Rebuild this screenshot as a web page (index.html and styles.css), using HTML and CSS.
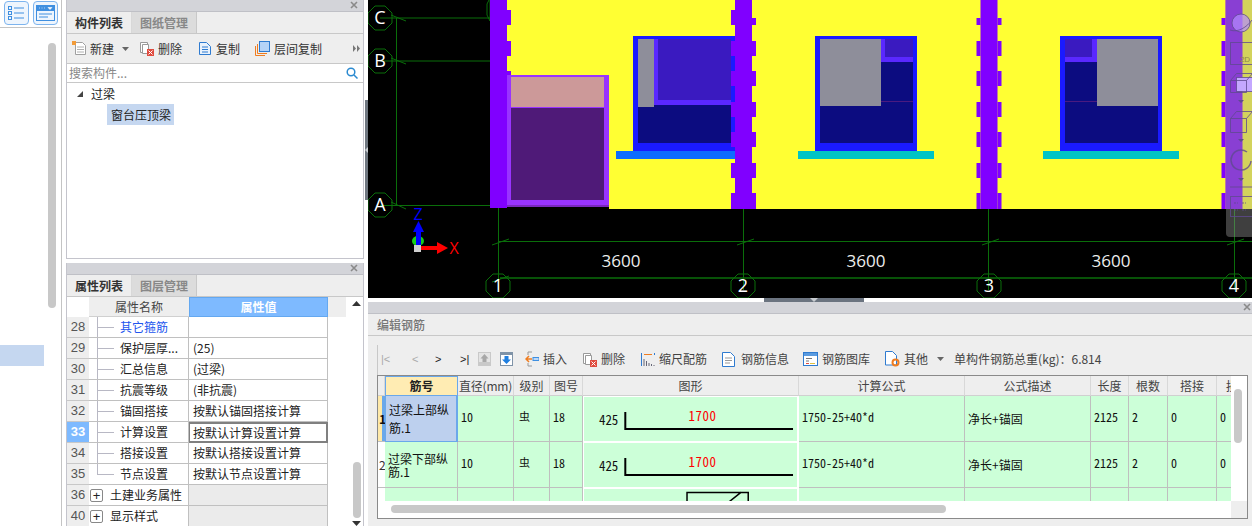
FILE: index.html
```html
<!DOCTYPE html>
<html lang="zh">
<head>
<meta charset="utf-8">
<title>编辑钢筋</title>
<link rel="stylesheet" href="styles.css">
</head>
<body>
<aside class="strip">
  <div class="strip-top">
    <span class="strip-btn"><svg width="21" height="20" viewBox="0 0 21 20"><g fill="none" stroke="#3f8fe0"><rect x="2.500" y="3.500" width="3" height="3"/><rect x="2.500" y="8.500" width="3" height="3"/><rect x="2.500" y="13.500" width="3" height="3"/><path d="M8 5h10M8 10h10M8 15h10"/></g></svg></span>
    <span class="strip-btn"><svg width="21" height="20" viewBox="0 0 21 20"><rect x="1.500" y="2.500" width="18" height="15" fill="none" stroke="#3f8fe0"/><rect x="2" y="3" width="17" height="5" fill="#3f8fe0"/><path d="M4 5h1M6.500 5h1M9 5h1M13 4.500h4l-2 2z" fill="#fff" stroke="#fff" stroke-width=".6"/><path d="M4 11h13M4 14h9" stroke="#3f8fe0"/></svg></span>
  </div>
  <div class="strip-body">
    <div class="strip-thumb"></div>
    <div class="strip-mark"></div>
  </div>
</aside>

<section class="side">
  <div class="panel panel-list">
    <div class="titlebar"><svg class="close" width="9" height="9" viewBox="0 0 9 9"><path d="M1 1l6 6M7 1L1 7" stroke="#8a8a8a" stroke-width="1.600"/></svg></div>
    <div class="tabs"><span class="tab tab-on">构件列表</span><span class="tab">图纸管理</span></div>
    <div class="toolbar">
      <span class="tool tool-new"><svg width="15" height="15" viewBox="0 0 15 15"><path d="M3.500 1.500h7l3 3v9h-10z" fill="#fff" stroke="#a0a0a0"/><path d="M5 6h7M5 8.500h7M5 11h7" stroke="#b0b0b0"/><path d="M0 0h4v4H0z" fill="#f29b38"/></svg>新建<svg class="caret" width="7" height="4" viewBox="0 0 7 4"><path d="M0 0h7L3.500 4z" fill="#666"/></svg></span>
      <span class="tool"><svg width="15" height="15" viewBox="0 0 15 15"><path d="M1.500 1.500h7v10h-7z" fill="#fff" stroke="#999"/><path d="M3.500 3.500h6v9h-6z" fill="#fff" stroke="#999"/><rect x="8" y="8" width="7" height="7" fill="#e04b3f"/><path d="M9.500 9.500l4 4M13.500 9.500l-4 4" stroke="#fff"/></svg>删除</span>
      <span class="tool"><svg width="14" height="15" viewBox="0 0 14 15"><path d="M1.500 1.500h7l4 4v8h-11z" fill="#e9f2fc" stroke="#2f7bd0"/><path d="M4 6h6M4 8.500h6M4 11h6" stroke="#2f7bd0"/></svg>复制</span>
      <span class="tool tool-pull"><svg width="15" height="15" viewBox="0 0 15 15"><path d="M.5 5v9.500H10" fill="none" stroke="#ef7d21"/><path d="M2.500 3v9.500H12" fill="none" stroke="#ef7d21"/><rect x="4.500" y=".5" width="10" height="10" fill="#b5d3f7" stroke="#2f7bd0"/></svg>层间复制</span>
      <svg class="more" width="7" height="7" viewBox="0 0 7 7"><path d="M0 0l3 3.500L0 7zM4 0l3 3.500L4 7z" fill="#777"/></svg>
    </div>
    <div class="search"><span>搜索构件...</span><svg width="12" height="12" viewBox="0 0 12 12"><circle cx="5" cy="5" r="3.800" fill="none" stroke="#2b8ad0" stroke-width="1.500"/><path d="M8 8l3.500 3.500" stroke="#2b8ad0" stroke-width="1.500"/></svg></div>
    <div class="tree">
      <div class="tree-root"><svg width="6" height="6" viewBox="0 0 6 6"><path d="M6 0v6H0z" fill="#444"/></svg>过梁</div>
      <div class="tree-leaf">窗台压顶梁</div>
    </div>
  </div>

  <div class="panel panel-props">
    <div class="titlebar"><svg class="close" width="9" height="9" viewBox="0 0 9 9"><path d="M1 1l6 6M7 1L1 7" stroke="#8a8a8a" stroke-width="1.600"/></svg></div>
    <div class="tabs"><span class="tab tab-on">属性列表</span><span class="tab">图层管理</span></div>
    <div class="props-body">
      <div class="props">
        <div class="ph ph-no"></div><div class="ph">属性名称</div><div class="ph ph-val">属性值</div>
        <div class="no">28</div><div class="nm twig link">其它箍筋</div><div class="val"></div>
        <div class="no">29</div><div class="nm twig">保护层厚...</div><div class="val">(25)</div>
        <div class="no">30</div><div class="nm twig">汇总信息</div><div class="val">(过梁)</div>
        <div class="no">31</div><div class="nm twig">抗震等级</div><div class="val">(非抗震)</div>
        <div class="no">32</div><div class="nm twig">锚固搭接</div><div class="val">按默认锚固搭接计算</div>
        <div class="no no-on">33</div><div class="nm twig">计算设置</div><div class="val val-on">按默认计算设置计算</div>
        <div class="no">34</div><div class="nm twig">搭接设置</div><div class="val">按默认搭接设置计算</div>
        <div class="no">35</div><div class="nm twig twig-end">节点设置</div><div class="val">按默认节点设置计算</div>
        <div class="no">36</div><div class="nm group"><i class="plus">+</i>土建业务属性</div><div class="val val-group"></div>
        <div class="no">40</div><div class="nm group"><i class="plus">+</i>显示样式</div><div class="val val-group"></div>
      </div>
      <div class="props-gutter">
        <div class="ph-tail"></div>
        <svg class="arrow-up" width="9" height="5" viewBox="0 0 9 5"><path d="M0 5h9L4.500 0z" fill="#333"/></svg>
        <div class="props-thumb"></div>
        <svg class="arrow-down" width="9" height="5" viewBox="0 0 9 5"><path d="M0 0h9L4.500 5z" fill="#333"/></svg>
      </div>
    </div>
  </div>
</section>

<main class="main">
  <div class="edge-grip"><svg width="3" height="6" viewBox="0 0 3 6"><path d="M3 0v6L0 3z" fill="#c8ccd0"/></svg></div>
  <div class="canvas">
    <svg class="cad" width="884" height="298" viewBox="368 0 884 298">
      <defs>
        <g id="col-left">
          <rect x="0" y="0" width="17" height="209"/>
          <rect x="-4" y="18" width="4" height="7"/>
          <rect x="-4" y="41" width="4" height="15"/>
          <rect x="-4" y="71" width="4" height="15"/>
          <rect x="-4" y="102" width="4" height="15"/>
          <rect x="-4" y="132" width="4" height="15"/>
          <rect x="-4" y="163" width="4" height="15"/>
          <rect x="-4" y="193" width="4" height="16"/>
        </g>
        <g id="col">
          <use href="#col-left"/>
          <rect x="17" y="18" width="4" height="7"/>
          <rect x="17" y="41" width="4" height="15"/>
          <rect x="17" y="71" width="4" height="15"/>
          <rect x="17" y="102" width="4" height="15"/>
          <rect x="17" y="132" width="4" height="15"/>
          <rect x="17" y="163" width="4" height="15"/>
          <rect x="17" y="193" width="4" height="16"/>
        </g>
        <g id="col-first">
          <rect x="490" y="0" width="17" height="208"/>
          <rect x="507" y="10" width="4" height="15"/>
          <rect x="507" y="41" width="4" height="15"/>
          <rect x="507" y="71" width="4" height="6"/>
        </g>
      </defs>
      <rect x="368" y="0" width="884" height="298" fill="#000"/>
      <g fill="none" stroke="#0a6e0a">
        <path d="M380 18H490M380 61H490M380 205.500H490M396.500 18V205.500"/>
        <path d="M391 15l15 6M391 58l15 6M391 202l15 7"/>
        <path d="M498.500 208V290M743.500 208V290M988.500 208V290M1234.500 208V290M498 241.500H1252"/>
        <path d="M492 245l17-6M737 245l17-6M982 245l17-6M1227 245l17-6M492 282l17-6"/>
        <path d="M500 278H1252" stroke-width="1.500"/>
        <polygon points="375,6 385,6 392,13 392,23 385,30 375,30 368,23 368,13"/>
        <polygon points="375,49 385,49 392,56 392,66 385,73 375,73 368,66 368,56"/>
        <polygon points="375,193 385,193 392,200 392,210 385,217 375,217 368,210 368,200"/>
        <polygon points="493,274 503,274 510,281 510,291 503,298 493,298 486,291 486,281"/>
        <polygon points="738,274 748,274 755,281 755,291 748,298 738,298 731,291 731,281"/>
        <polygon points="984,274 994,274 1001,281 1001,291 994,298 984,298 977,291 977,281"/>
        <polygon points="1229,274 1239,274 1246,281 1246,291 1239,298 1229,298 1222,291 1222,281"/>
        <polygon points="490,-2 487,4 487,15 490,21"/>
      </g>
      <path d="M507 0H1252V209H609V75H507z" fill="#ffff33"/>
      <use href="#col-first" fill="#8000ff"/>

      <rect x="507" y="75" width="102" height="132" fill="#9933ff"/>
      <rect x="511" y="77" width="93" height="30" fill="#cc9999"/>
      <rect x="511" y="108" width="93" height="92" fill="#4f1a78"/>
      <rect x="507" y="205" width="102" height="2" fill="#7a28c0"/>

      <rect x="633" y="36" width="103" height="115" fill="#1a1aff"/>
      <rect x="638" y="39" width="93" height="104" fill="#0c0c80"/>
      <rect x="638" y="39" width="93" height="66" fill="#5a28ff"/>
      <rect x="658" y="39" width="73" height="61" fill="#3a1ac0"/>
      <rect x="638" y="39" width="16" height="68" fill="#8e8e9a"/>
      <rect x="616" y="151" width="136" height="8" fill="#0d6cff"/>

      <rect x="815" y="36" width="102" height="115" fill="#1a1aff"/>
      <rect x="820" y="39" width="93" height="104" fill="#0c0c80"/>
      <rect x="880" y="39" width="33" height="23" fill="#5a28ff"/>
      <rect x="885" y="39" width="28" height="18" fill="#3a1ac0"/>
      <rect x="880" y="101" width="33" height="1" fill="#4a1a80"/>
      <rect x="820" y="39" width="61" height="67" fill="#8e8e9a"/>
      <rect x="798" y="151" width="136" height="8" fill="#00c4c4"/>

      <rect x="1060" y="36" width="102" height="115" fill="#1a1aff"/>
      <rect x="1065" y="39" width="93" height="104" fill="#0c0c80"/>
      <rect x="1065" y="39" width="33" height="23" fill="#5a28ff"/>
      <rect x="1065" y="39" width="27" height="18" fill="#3a1ac0"/>
      <rect x="1065" y="101" width="33" height="1" fill="#4a1a80"/>
      <rect x="1097" y="39" width="61" height="67" fill="#8e8e9a"/>
      <rect x="1043" y="151" width="136" height="8" fill="#00c4c4"/>

      <use href="#col" x="735" fill="#8000ff"/>
      <use href="#col" x="980.500" fill="#8000ff"/>
      <use href="#col-left" x="1225.500" fill="#8000ff"/>
      <rect x="731" y="10" width="5" height="15" fill="#8000ff"/>

      <g class="cad-label">
        <text x="380" y="24">C</text>
        <text x="380" y="67">B</text>
        <text x="380" y="211">A</text>
        <text x="498" y="292">1</text>
        <text x="743" y="292">2</text>
        <text x="989" y="292">3</text>
        <text x="1234" y="292">4</text>
      </g>
      <g class="cad-dim">
        <text x="621" y="267">3600</text>
        <text x="866" y="267">3600</text>
        <text x="1111" y="267">3600</text>
      </g>

      <ellipse cx="418" cy="241" rx="6" ry="5" fill="#16d016"/>
      <rect x="416" y="228" width="5" height="17" fill="#0000ff"/>
      <path d="M413 232l5.500-11 5.500 11z" fill="#0000ff"/>
      <rect x="421" y="246" width="18" height="4" fill="#ff0000"/>
      <path d="M437 242l11 6-11 6z" fill="#ff0000"/>
      <rect x="414" y="245" width="7" height="7" fill="#cfcfcf"/>
      <text class="axis axis-z" x="418" y="220">Z</text>
      <text class="axis axis-x" x="454" y="254">X</text>
    </svg>

    <div class="viewbar">
      <svg width="26" height="237" viewBox="0 0 26 237"><g fill="none" stroke="#5f4a90" stroke-opacity=".8">
        <circle cx="15" cy="23" r="9" fill="#b48cff" fill-opacity=".7"/>
        <path d="M4 30c8 3 17-3 22-10"/>
        <rect x="4.500" y="42.500" width="22" height="22"/>
        <rect x="10.500" y="77.500" width="16" height="14" fill="#c4a8ff" stroke="#5f4a90"/>
        <path d="M4.500 80.500l6-7h16M4.500 80.500h16v12h-16zM20.500 80.500l6-7"/>
        <path d="M4.500 118.500l6-7h16M4.500 118.500h16v14h-16zM20.500 118.500l6-7"/>
        <path d="M21 152a10 10 0 1 0 4 9" stroke-width="1.500"/>
        <path d="M4 187h22"/>
        <rect x="4.500" y="196.500" width="22" height="20"/>
        <path d="M8 203h4M16 203h4M8 210h4M16 210h4" stroke-dasharray="2 1"/>
      </g>
      <path d="M12 100h6l-3 3zM12 139h6l-3 3zM12 178h6l-3 3z" fill="#5f4a90"/>
      <text class="viewbar-2d" x="19" y="62">2D</text></svg>
    </div>
  </div>

  <div class="splitter"><div class="splitter-grip"><svg width="8" height="4" viewBox="0 0 8 4"><path d="M0 0h8L4 4z" fill="#c8ccd0"/></svg></div></div>

  <div class="rebar">
    <div class="titlebar titlebar-wide"><svg class="close" width="9" height="9" viewBox="0 0 9 9"><path d="M1 1l6 6M7 1L1 7" stroke="#8a8a8a" stroke-width="1.600"/></svg></div>
    <div class="rebar-head">编辑钢筋</div>
    <div class="rebar-body">
      <div class="rebar-tools">
        <span class="pager pager-1">|&lt;</span><span class="pager pager-2">&lt;</span><span class="pager pager-3 pager-on">&gt;</span><span class="pager pager-4 pager-on">&gt;|</span>
        <svg class="mv" width="13" height="14" viewBox="0 0 13 14"><rect width="13" height="14" fill="#c9c9c9"/><rect x="1" y="1" width="11" height="9" fill="#e4e4e4"/><path d="M6.500 2l4 4.500H8.500v3.500h-4V6.500H2.500z" fill="#a8a8a8"/></svg>
        <svg class="mv" width="13" height="14" viewBox="0 0 13 14"><rect width="13" height="14" fill="#7f93a8"/><rect x="1" y="3" width="11" height="10" fill="#fff"/><path d="M6.500 12L2 7.500h2.500V4h4v3.500H11z" fill="#1f7fe0"/></svg>
        <div class="tools-row">
          <span class="tool"><svg width="14" height="16" viewBox="0 0 14 16"><path d="M3 1h4M3 15h4M3 1v3M3 12v3" stroke="#999" fill="none"/><path d="M7 8H1M4 5L1 8l3 3" fill="none" stroke="#ef7d21" stroke-width="1.500"/><rect x="8" y="6.500" width="6" height="3" fill="#bcd8f8" stroke="#3f8fe0"/></svg>插入</span>
          <span class="tool"><svg width="15" height="15" viewBox="0 0 15 15"><path d="M1.500 1.500h7v10h-7z" fill="#fff" stroke="#999"/><path d="M3.500 3.500h6v9h-6z" fill="#fff" stroke="#999"/><rect x="8" y="8" width="7" height="7" fill="#e04b3f"/><path d="M9.500 9.500l4 4M13.500 9.500l-4 4" stroke="#fff"/></svg>删除</span>
          <span class="tool tool-push"><svg width="14" height="15" viewBox="0 0 14 15"><path d="M.5 1v13M13.500 1v2" stroke="#2f7bd0" fill="none"/><path d="M3 2.500h8" stroke="#ef7d21"/><path d="M3 14V7M5.500 14V9M8 14v-3M10.500 14v-2M13 14v-1" stroke="#667"/></svg>缩尺配筋</span>
          <span class="tool tool-airy"><svg width="13" height="15" viewBox="0 0 13 15"><path d="M.5.5h8l4 4v10H.5z" fill="#fff" stroke="#2f7bd0"/><path d="M3 6h7M3 8.500h7M3 11h5" stroke="#999"/></svg>钢筋信息</span>
          <span class="tool tool-pull"><svg width="15" height="14" viewBox="0 0 15 14"><rect x=".5" y=".5" width="14" height="13" fill="#fff" stroke="#2f7bd0"/><rect x="1" y="1" width="13" height="3" fill="#5a9be0"/><path d="M3 6.500h6M3 9h3" stroke="#777"/><path d="M3 11.500h3" stroke="#e04b3f"/><path d="M7 11.500h5" stroke="#e0c040"/></svg>钢筋图库</span>
          <span class="tool"><svg width="15" height="16" viewBox="0 0 15 16"><path d="M.5.5h7l4 4V14H.5z" fill="#fff" stroke="#2f7bd0"/><circle cx="10.500" cy="11.500" r="3" fill="none" stroke="#ef7d21" stroke-width="2"/></svg>其他<svg class="caret" width="7" height="4" viewBox="0 0 7 4"><path d="M0 0h7L3.500 4z" fill="#666"/></svg></span>
          <span class="total">单构件钢筋总重(kg)：6.814</span>
        </div>
      </div>

      <div class="sheet">
        <div class="sheet-view">
          <div class="grid">
            <div class="gh"></div><div class="gh gh-sel">筋号</div><div class="gh gh-tight">直径(mm)</div><div class="gh">级别</div><div class="gh">图号</div><div class="gh">图形</div><div class="gh">计算公式</div><div class="gh">公式描述</div><div class="gh">长度</div><div class="gh">根数</div><div class="gh">搭接</div><div class="gh">损耗</div>

            <div class="rh rh-sel">1</div><div class="c c-name c-sel">过梁上部纵筋.1</div><div class="c m">10</div><div class="c grade">虫</div><div class="c m">18</div>
            <div class="c c-shape"><svg width="214" height="43" viewBox="0 0 214 43"><text class="s-num" x="15" y="27">425</text><path d="M41.500 14v17H210" fill="none" stroke="#000" stroke-width="2"/><text class="s-len" x="105" y="23">1700</text></svg></div>
            <div class="c m">1750-25+40*d</div><div class="c">净长+锚固</div><div class="c m">2125</div><div class="c m">2</div><div class="c m">0</div><div class="c m">0</div>

            <div class="rh">2</div><div class="c c-name c-tight">过梁下部纵筋.1</div><div class="c m">10</div><div class="c grade">虫</div><div class="c m">18</div>
            <div class="c c-shape"><svg width="214" height="43" viewBox="0 0 214 43"><text class="s-num" x="15" y="27">425</text><path d="M41.500 14v17H210" fill="none" stroke="#000" stroke-width="2"/><text class="s-len" x="105" y="23">1700</text></svg></div>
            <div class="c m">1750-25+40*d</div><div class="c">净长+锚固</div><div class="c m">2125</div><div class="c m">2</div><div class="c m">0</div><div class="c m">0</div>

            <div class="rh"></div><div class="c"></div><div class="c"></div><div class="c"></div><div class="c"></div>
            <div class="c c-shape"><svg width="214" height="43" viewBox="0 0 214 43"><path d="M103.500 18V2.500H165V18M143 14l15-12" fill="none" stroke="#000" stroke-width="1.500"/></svg></div>
            <div class="c m c-top">2*((240-2*25)+(180-2*25))</div><div class="c"></div><div class="c"></div><div class="c"></div><div class="c"></div><div class="c"></div>
          </div>
        </div>
        <div class="vbar"><div class="vthumb"></div></div>
        <div class="hbar"><div class="hthumb"></div></div>
        <div class="corner"></div>
      </div>
    </div>
  </div>
</main>
</body>
</html>
```
FILE: styles.css
```css
* { box-sizing: border-box; }
html, body { margin: 0; padding: 0; }
body {
  width: 1252px; height: 526px; overflow: hidden;
  display: flex; background: #fff; color: #222;
  font: 12px/1 "Noto Sans CJK SC", "Liberation Sans", sans-serif;
}

/* far left strip */
.strip { width: 62px; border-right: 1px solid #c4c4c4; display: flex; flex-direction: column; }
.strip-top { height: 28px; padding: 1px 3px 0 4px; display: flex; gap: 4px; border-bottom: 1px solid #c4c4c4; }
.strip-btn { width: 25px; height: 24px; border: 1px solid #7db4ee; border-radius: 4px; background: #eef5fd; display: flex; align-items: center; justify-content: center; }
.strip-body { flex: 1; padding-top: 15px; }
.strip-thumb { width: 8px; height: 265px; margin-left: 48px; border-radius: 4px; background: #c8c8c8; }
.strip-mark { width: 44px; height: 21px; margin-top: 37px; background: #c5d7f0; }

/* component + property column */
.side { width: 306px; padding: 0 4px; display: flex; flex-direction: column; gap: 4px; }
.panel { border: 1px solid #c4c4cc; border-top: 0; display: flex; flex-direction: column; }
.panel-list { height: 259px; flex: none; }
.panel-props { flex: 1; min-height: 0; border-bottom: 0; }
.titlebar { height: 12px; background: #d3d4d9; border-bottom: 1px solid #bfc0c6; display: flex; justify-content: flex-end; align-items: center; padding-right: 4px; flex: none; }
.titlebar-wide { padding-right: 0; }
.close { display: block; }
.tabs { height: 22px; background: #eee; border-bottom: 1px solid #c8c8c8; display: flex; flex: none; }
.tab { width: 65px; background: #dcdcdc; border-right: 1px solid #c8c8c8; color: #888; font-weight: 700; display: flex; align-items: center; justify-content: center; }
.tab-on { background: #eee; color: #333; border-right: 1px solid #d8d8d8; }

.toolbar { height: 30px; background: #eee; border-bottom: 1px solid #c8c8c8; padding: 0 2px 0 5px; display: flex; align-items: center; gap: 16px; flex: none; color: #333; }
.tool { display: flex; align-items: center; gap: 4px; white-space: nowrap; color: #333; }
.tool-new { gap: 3px; margin-right: -6px; }
.tool-pull { margin-left: -1px; }
.caret { margin-left: 5px; }
.more { margin-left: auto; margin-right: 1px; }
.search { height: 19px; border-bottom: 1px solid #c8c8c8; padding: 0 5px 0 2px; display: flex; align-items: center; justify-content: space-between; color: #888; flex: none; }
.tree { flex: 1; }
.tree-root { height: 21px; padding-left: 10px; display: flex; align-items: center; gap: 8px; color: #222; }
.tree-leaf { width: 67px; height: 21px; margin-left: 40px; background: #c5d7f0; padding-left: 4px; line-height: 21px; white-space: nowrap; }

.props-body { flex: 1; display: flex; min-height: 0; overflow: hidden; }
.props { width: 261px; display: grid; grid-template-columns: 22px 100px 139px; grid-template-rows: 20px; grid-auto-rows: 21px; align-content: start; }
.ph { height: 20px; background: #eee; border-bottom: 1px solid #d0d0d0; display: flex; align-items: center; justify-content: center; color: #444; }
.ph-no { background: #fff; border: 0; }
.ph-val { background: #7ebaff; color: #fff; border: 1px solid #64a8f0; font-weight: 700; }
.no { background: #eee; border-bottom: 1px solid #c8c8c8; color: #555; font: 13px/20px "Liberation Sans", sans-serif; text-align: center; }
.no-on { background: #7ebaff; color: #fff; font-weight: 700; }
.nm { border-bottom: 1px solid #c0c0c0; border-right: 1px solid #c0c0c0; line-height: 20px; padding-left: 31px; white-space: nowrap; }
.twig {
  background:
    linear-gradient(#b8b8c4, #b8b8c4) 8px 0 / 1px 100% no-repeat,
    linear-gradient(#b8b8c4, #b8b8c4) 8px 10px / 17px 1px no-repeat;
}
.twig-end {
  background:
    linear-gradient(#b8b8c4, #b8b8c4) 8px 0 / 1px 11px no-repeat,
    linear-gradient(#b8b8c4, #b8b8c4) 8px 10px / 17px 1px no-repeat;
}
.link { color: #2255ee; }
.val { border-bottom: 1px solid #c0c0c0; border-right: 1px solid #c0c0c0; line-height: 20px; padding-left: 4px; white-space: nowrap; }
.val-on { border: 2px solid #808080; border-left-width: 1px; line-height: 18px; padding-left: 3px; }
.group { padding-left: 1px; display: flex; align-items: center; gap: 7px; }
.val-group { background: #ebebeb; }
.plus { width: 13px; height: 13px; border: 1px solid #888; border-radius: 2px; background: #fff; font: 13px/11px "Liberation Sans", sans-serif; text-align: center; color: #222; flex: none; }
.props-gutter { flex: 1; display: flex; flex-direction: column; align-items: center; padding-left: 3px; }
.ph-tail { width: 18px; height: 20px; margin: 0 0 -16px -3px; background: #eee; align-self: flex-start; }
.arrow-up { margin: 0 0 0 19px; position: relative; }
.props-thumb { width: 8px; height: 57px; margin: 156px 0 0 19px; border-radius: 4px; background: #c8c8c8; }
.arrow-down { margin: 3px 0 0 19px; }

/* main */
.main { flex: 1; min-width: 0; display: flex; flex-direction: column; position: relative; }
.edge-grip { position: absolute; left: -3px; top: 100px; width: 3px; height: 100px; background: #6f7780; display: flex; align-items: center; }
.edge-grip svg { display: block; }
.canvas { height: 298px; position: relative; overflow: hidden; flex: none; }
.cad { display: block; }
.cad-label text { fill: #fff; font: 18px "Open Sans", sans-serif; text-anchor: middle; }
.cad-dim text { fill: #eee; font: 17px "Open Sans", sans-serif; text-anchor: middle; }
.axis { font: 16px "Open Sans", sans-serif; text-anchor: middle; }
.axis-z { fill: #0000ff; }
.axis-x { fill: #ff0000; }
.viewbar { position: absolute; right: 0; top: 0; width: 26px; height: 237px; background: rgba(150,150,150,.42); border-radius: 0 0 0 4px; }
.viewbar svg { display: block; }
.viewbar-2d { fill: #8d8650; font: 8px "Liberation Sans", sans-serif; text-anchor: middle; }

.splitter { height: 4px; flex: none; padding-left: 396px; background: #fff; }
.splitter-grip { width: 100px; height: 4px; background: #6b7480; display: flex; justify-content: center; align-items: flex-start; }
.splitter-grip svg { display: block; }

.rebar { flex: 1; min-height: 0; display: flex; flex-direction: column; background: #eee; }
.rebar-head { height: 22px; border-bottom: 1px solid #c8c8c8; background: #eee; color: #777; font-weight: 500; line-height: 21px; padding-left: 9px; flex: none; }
.rebar-body { flex: 1; min-height: 0; padding: 0 4px 7px 9px; display: flex; flex-direction: column; }
.rebar-tools { height: 39px; padding: 7px 0 0 4px; display: flex; align-items: center; background: linear-gradient(#c8c8c8, #c8c8c8) 0 9px / 1px 30px no-repeat; flex: none; }
.pager { text-align: left; font: 11px "Liberation Sans", sans-serif; color: #aaa; white-space: nowrap; flex: none; }
.pager-on { color: #222; }
.pager-1 { width: 31px; }
.pager-2 { width: 23px; }
.pager-3 { width: 25px; }
.pager-4 { width: 18px; }
.mv { margin-right: 9px; flex: none; }
.tools-row { display: flex; align-items: center; gap: 15px; margin-left: 3px; }
.tools-row .tool { color: #444; }
.tool-push { margin-left: 1px; }
.tool-airy { gap: 6px; }
.total { color: #444; white-space: nowrap; margin-left: -5px; }

.sheet { flex: 1; min-height: 0; border: 1px solid #8a8a8a; background: #fff; display: grid; grid-template-columns: 1fr 16px; grid-template-rows: 1fr 17px; }
.sheet-view { overflow: hidden; min-height: 0; }
.grid { width: 880px; display: grid; grid-template-columns: 7px 73px 56px 36px 33px 216px 166px 126px 38px 39px 49px 43px; grid-template-rows: 20px 46px 46px 46px; }
.gh { background: #eee; border-right: 1px solid #d8d8d8; border-bottom: 1px solid #d0d0d0; color: #444; display: flex; align-items: center; justify-content: center; white-space: nowrap; overflow: hidden; }
.gh-sel { background: #ffecb3; border: 1px solid #6aa8ea; color: #222; font-weight: 700; }
.gh-tight { letter-spacing: -.2px; }
.rh { background: #fff; border-bottom: 1px solid #bfbfbf; font-size: 12px; line-height: 45px; white-space: nowrap; padding-left: 1px; color: #333; }
.rh-sel { background: linear-gradient(90deg, #ffe9a8 4px, #6aa8ea 4px); font-weight: 700; color: #111; }
.c { background: #ccffd8; border-right: 1px solid #bfbfbf; border-bottom: 1px solid #bfbfbf; padding: 0 3px; display: flex; align-items: center; overflow: hidden; color: #111; }
.m { font: 12px "Noto Sans Mono CJK SC", "DejaVu Sans Mono", monospace; padding: 0 3px 4px; }
.grade { padding: 0 5px 4px; font-size: 11px; }
.c-name { line-height: 18px; padding: 0 3px; }
.c-tight { line-height: 13px; }
.c-sel { background: #bdd0ee; border: 1px solid #6aa8ea; border-width: 0 2px 1px 1px; }
.c-shape { padding: 0; border: 1px solid #fff; border-right: 2px solid #fff; box-shadow: 1px 0 0 #bfbfbf; }
.c-shape svg { display: block; }
.c-top { align-items: flex-start; padding-top: 9px; white-space: nowrap; overflow: visible; }
.s-num { font: 13px "Noto Sans Mono CJK SC", "DejaVu Sans Mono", monospace; fill: #111; }
.s-len { font: 13px "Noto Sans Mono CJK SC", "DejaVu Sans Mono", monospace; fill: #f00; letter-spacing: .5px; }
.vbar { background: #fff; padding: 13px 0 0 3px; }
.vthumb { width: 8px; height: 54px; border-radius: 4px; background: #c8c8c8; }
.hbar { background: #fff; padding: 4px 0 0 13px; }
.hthumb { width: 555px; height: 8px; border-radius: 4px; background: #c8c8c8; }
.corner { background: #eee; }
```
